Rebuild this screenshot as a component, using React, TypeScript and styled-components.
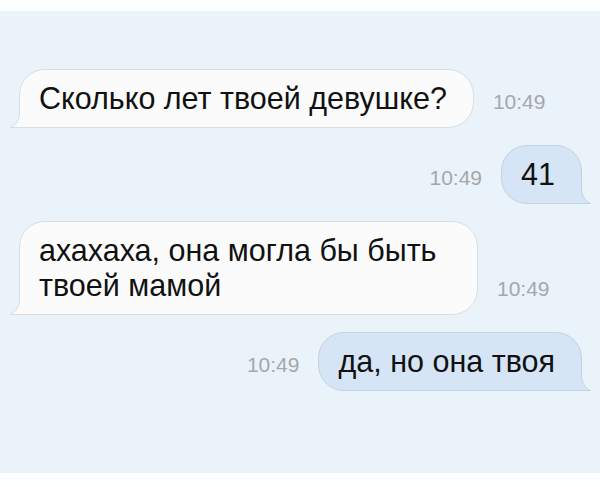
import { FC, ReactNode } from "react";
import styled, { createGlobalStyle } from "styled-components";

const GlobalStyle = createGlobalStyle`
    html, body {
        margin: 0;
        padding: 0;
        background: #fdfefe;
    }
    body {
        padding-top: 11px;
        font-family: "Liberation Sans", Arial, sans-serif;
    }
`

const Screen = styled.div`
    height: 462px;
    background: #eaf3fa;
    box-sizing: border-box;
    padding: 58px 18px 0 19px;
    display: flex;
    flex-direction: column;
    gap: 17px;
`

const Row = styled.div<{ $out?: boolean }>`
    display: flex;
    align-items: flex-end;
    justify-content: ${p => (p.$out ? "flex-end" : "flex-start")};
    gap: 19px;
`

const Bubble = styled.div<{ $out?: boolean; $minWidth?: number }>`
    position: relative;
    box-sizing: border-box;
    min-width: ${p => (p.$minWidth ? `${p.$minWidth}px` : "0")};
    padding: 11px 26px 11px 19px;
    border-radius: 26px;
    background: ${p => (p.$out ? "#d5e5f5" : "#fbfbfb")};
    border: 1px solid ${p => (p.$out ? "#c3d2e0" : "#d9dee3")};
    color: #111;
    font-size: 30.5px;
    line-height: 35px;
    white-space: nowrap;
`

const Text = styled.span`
    position: relative;
`

const TailSvg = styled.svg<{ $out?: boolean }>`
    position: absolute;
    bottom: -1px;
    ${p => (p.$out ? "right: -10px; transform: scaleX(-1);" : "left: -10px;")}
    width: 40px;
    height: 30px;
    overflow: visible;
`

const Time = styled.span`
    color: #a4a8ac;
    font-size: 21px;
    line-height: 20px;
    margin-bottom: 16px;
`

const Tail: FC<{ out?: boolean }> = ({ out }) => {
    const fill = out ? "#d5e5f5" : "#fbfbfb";
    const stroke = out ? "#c3d2e0" : "#d9dee3";
    return (
        <TailSvg $out={out} viewBox="0 0 40 30">
            <path d="M9.5 0 L9.5 14 C9.5 22 6 27 0.5 29.5 L40 29.5 L40 0 Z" fill={fill} />
            <path d="M9.5 0 L9.5 14 C9.5 22 6 27 0.5 29.5 L40 29.5" fill="none" stroke={stroke} strokeWidth="1" />
        </TailSvg>
    );
}

type MsgProps = { out?: boolean; time: string; minWidth?: number; children: ReactNode };

const Message: FC<MsgProps> = ({ out, time, minWidth, children }) => (
    <Row $out={out}>
        {out && <Time>{time}</Time>}
        <Bubble $out={out} $minWidth={minWidth}>
            <Tail out={out} />
            <Text>{children}</Text>
        </Bubble>
        {!out && <Time>{time}</Time>}
    </Row>
)

const App: FC = () => {
    return (
        <>
            <GlobalStyle />
            <Screen>
                <Message time="10:49">Сколько лет твоей девушке?</Message>
                <Message out time="10:49">41</Message>
                <Message time="10:49" minWidth={459}>
                    ахахаха, она могла бы быть<br />твоей мамой
                </Message>
                <Message out time="10:49">да, но она твоя</Message>
            </Screen>
        </>
    );
}

export default App;
